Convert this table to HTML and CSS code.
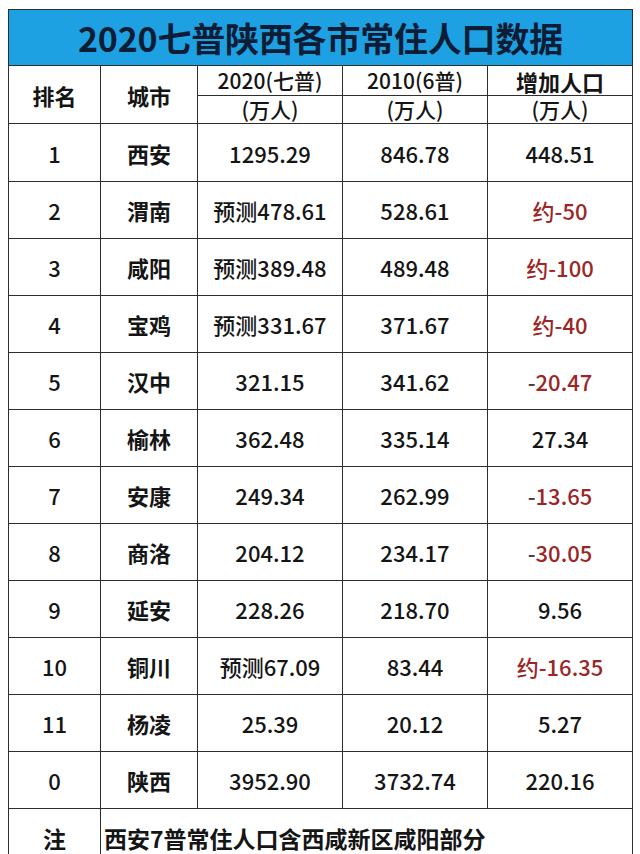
FILE: index.html
```html
<!DOCTYPE html>
<html lang="zh-CN">
<head>
<meta charset="utf-8">
<title>2020七普陕西各市常住人口数据</title>
<link rel="stylesheet" href="styles.css">
</head>
<body>
<table class="pop">
  <colgroup>
    <col class="c-rank"><col class="c-city"><col class="c-num"><col class="c-num"><col class="c-num">
  </colgroup>
  <thead>
    <tr class="r-title"><th colspan="5" class="title">2020七普陕西各市常住人口数据</th></tr>
    <tr class="r-h1">
      <th rowspan="2" class="hb">排名</th>
      <th rowspan="2" class="hb">城市</th>
      <th class="hm">2020(七普)</th>
      <th class="hm">2010(6普)</th>
      <th class="hb">增加人口</th>
    </tr>
    <tr class="r-h2">
      <th class="hm">(万人)</th>
      <th class="hm">(万人)</th>
      <th class="hm">(万人)</th>
    </tr>
  </thead>
  <tbody>
    <tr class="first"><td>1</td><td class="city">西安</td><td>1295.29</td><td>846.78</td><td>448.51</td></tr>
    <tr><td>2</td><td class="city">渭南</td><td>预测478.61</td><td>528.61</td><td class="neg">约-50</td></tr>
    <tr><td>3</td><td class="city">咸阳</td><td>预测389.48</td><td>489.48</td><td class="neg">约-100</td></tr>
    <tr><td>4</td><td class="city">宝鸡</td><td>预测331.67</td><td>371.67</td><td class="neg">约-40</td></tr>
    <tr><td>5</td><td class="city">汉中</td><td>321.15</td><td>341.62</td><td class="neg"><span class="minus">-</span>20.47</td></tr>
    <tr><td>6</td><td class="city">榆林</td><td>362.48</td><td>335.14</td><td>27.34</td></tr>
    <tr><td>7</td><td class="city">安康</td><td>249.34</td><td>262.99</td><td class="neg"><span class="minus">-</span>13.65</td></tr>
    <tr><td>8</td><td class="city">商洛</td><td>204.12</td><td>234.17</td><td class="neg"><span class="minus">-</span>30.05</td></tr>
    <tr><td>9</td><td class="city">延安</td><td>228.26</td><td>218.70</td><td>9.56</td></tr>
    <tr><td>10</td><td class="city">铜川</td><td>预测67.09</td><td>83.44</td><td class="neg">约-16.35</td></tr>
    <tr><td>11</td><td class="city">杨凌</td><td>25.39</td><td>20.12</td><td>5.27</td></tr>
    <tr><td>0</td><td class="city">陕西</td><td>3952.90</td><td>3732.74</td><td>220.16</td></tr>
    <tr class="note"><td class="note-k">注</td><td colspan="4" class="note-t">西安7普常住人口含西咸新区咸阳部分</td></tr>
  </tbody>
</table>
</body>
</html>
```

FILE: styles.css
```css
html, body {
  margin: 0;
  padding: 0;
  background: #ffffff;
}

body {
  font-family: "Noto Sans CJK SC", "Noto Sans", sans-serif;
  color: #151515;
  overflow: hidden;
}

.pop {
  margin: 9px 0 0 8px;
  width: 624px;
  border-collapse: collapse;
  table-layout: fixed;
}

.c-rank { width: 92px; }
.c-city { width: 97px; }
.c-num { width: 145px; }

.pop th,
.pop td {
  border: 1px solid #2e2e2e;
  padding: 0;
  text-align: center;
  vertical-align: middle;
  line-height: 1;
  white-space: nowrap;
}

.r-title { height: 56px; }

.title {
  background: #1ea1e2;
  color: #0e1d36;
  font-size: 34px;
  font-weight: 700;
  letter-spacing: -0.2px;
  padding-top: 2px;
}

.r-h1 { height: 30px; }
.r-h2 { height: 28px; }

.hb {
  font-size: 22px;
  font-weight: 700;
}

.hm {
  font-size: 21px;
  font-weight: 500;
}

.pop tbody tr { height: 57px; }
.pop tbody tr.first { height: 58px; }

.pop td {
  font-size: 22px;
  font-weight: 500;
}

.pop td.city {
  font-weight: 700;
}

.pop td.neg {
  color: #9c2626;
}

.minus {
  color: #4a3a3a;
}

.pop tbody tr.note { height: 60px; }

.pop td.note-k {
  font-weight: 700;
  font-size: 23px;
  padding-bottom: 0;
}

.pop td.note-t {
  text-align: left;
  font-weight: 700;
  font-size: 23px;
  padding-left: 3px;
}
```
